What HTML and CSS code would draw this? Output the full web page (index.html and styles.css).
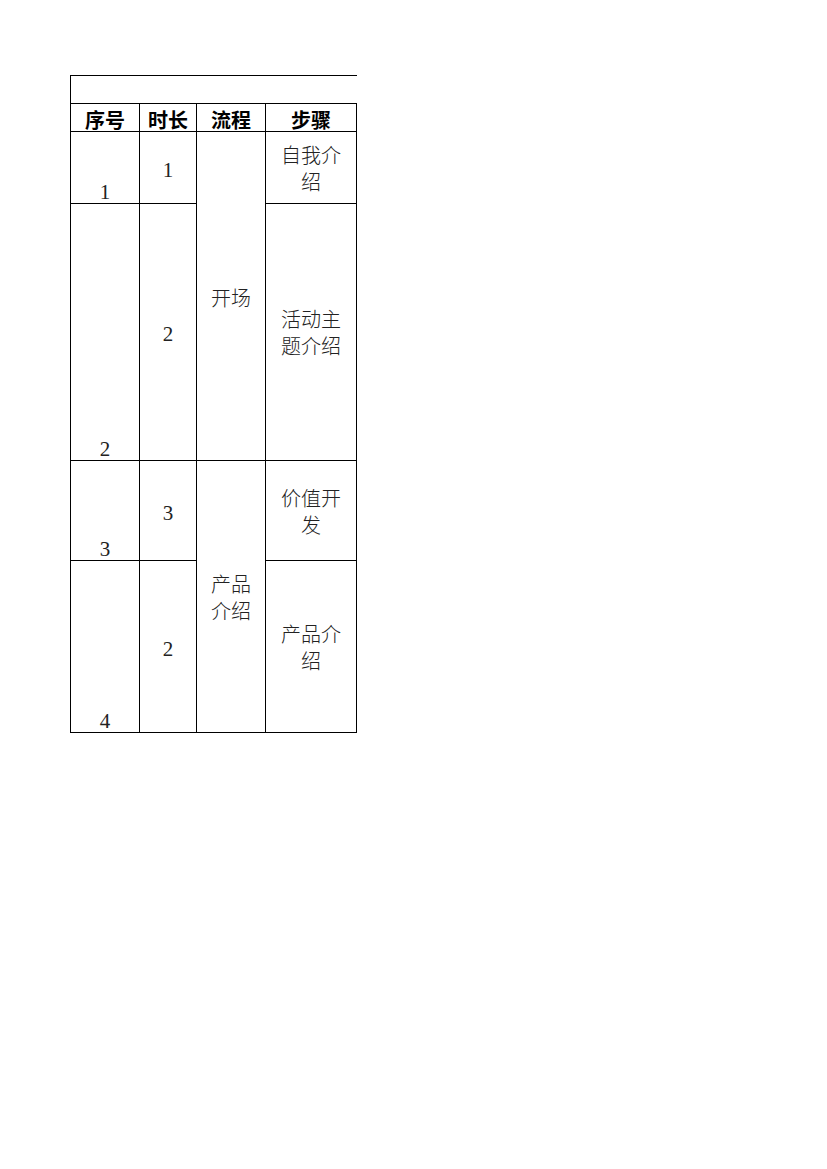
FILE: index.html
```html
<!DOCTYPE html>
<html lang="zh-CN">
<head>
<meta charset="utf-8">
<title>流程表</title>
<link rel="stylesheet" href="styles.css">
</head>
<body>
<div class="sheet">
  <div class="cell title"></div>
  <div class="cell head">序号</div>
  <div class="cell head">时长</div>
  <div class="cell head">流程</div>
  <div class="cell head">步骤</div>

  <div class="cell num r1">1</div>
  <div class="cell dur r1">1</div>
  <div class="cell phase r12">开场</div>
  <div class="cell step r1">自我介绍</div>

  <div class="cell num r2">2</div>
  <div class="cell dur r2">2</div>
  <div class="cell step r2">活动主题介绍</div>

  <div class="cell num r3">3</div>
  <div class="cell dur r3">3</div>
  <div class="cell phase r34">产品介绍</div>
  <div class="cell step r3">价值开发</div>

  <div class="cell num r4">4</div>
  <div class="cell dur r4">2</div>
  <div class="cell step r4">产品介绍</div>
</div>
</body>
</html>
```
FILE: styles.css
```css
* { box-sizing: border-box; }
html, body { margin: 0; padding: 0; background: #fff; }
body { width: 827px; height: 1169px; }

.sheet {
  margin: 75px 0 0 70px;
  display: grid;
  width: 287px;
  grid-template-columns: 69px 57px 69px 91px;
  grid-template-rows: 28px 28px 72px 257px 100px 172px;
  border-left: 1px solid #000;
  border-top: 1px solid #000;
  font-family: "Noto Sans CJK SC", "Liberation Serif", sans-serif;
  font-size: 20px;
  font-weight: 300;
  color: #222;
}

.cell {
  border-right: 1px solid #000;
  border-bottom: 1px solid #000;
  display: flex;
  justify-content: center;
  text-align: center;
}

.title { grid-column: 1 / 5; border-right: none; }

.head {
  font-weight: 700;
  color: #000;
  align-items: flex-end;
  line-height: 22px;
}

.num {
  grid-column: 1;
  align-items: flex-end;
  font-family: "Liberation Serif", serif;
  font-weight: 400;
  font-size: 21px;
  line-height: 20px;
  padding-bottom: 1px;
}

.dur {
  grid-column: 2;
  align-items: center;
  font-family: "Liberation Serif", serif;
  font-weight: 400;
  font-size: 21px;
  line-height: 20px;
  padding-top: 4px;
}

.phase {
  grid-column: 3;
  align-items: center;
  line-height: 27px;
  padding: 0 8px;
}

.step {
  grid-column: 4;
  align-items: center;
  line-height: 27px;
  padding: 0 7px;
}

.r1 { grid-row: 3; }
.r2 { grid-row: 4; }
.r3 { grid-row: 5; }
.r4 { grid-row: 6; }
.r12 { grid-row: 3 / 5; padding-top: 3px; }
.r34 { grid-row: 5 / 7; }
```
